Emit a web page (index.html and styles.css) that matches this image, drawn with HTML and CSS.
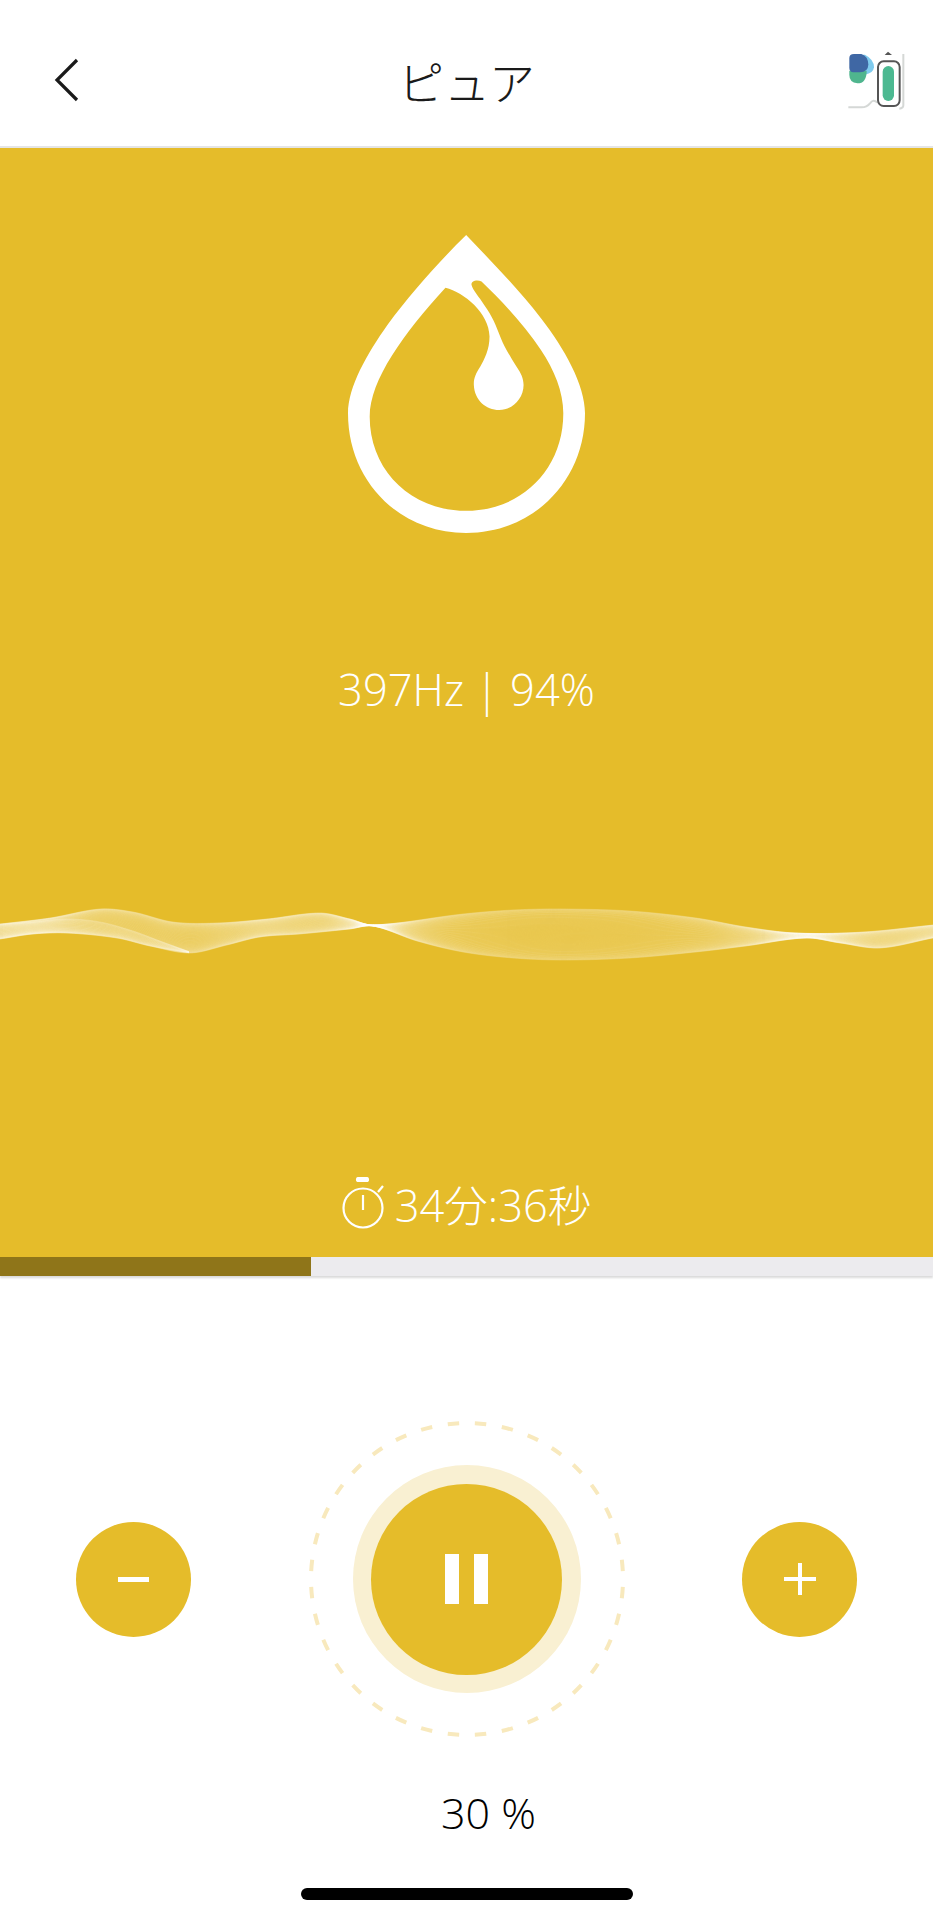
FILE: index.html
```html
<!DOCTYPE html>
<html>
<head>
  <title>ピュア</title>
  <link rel="stylesheet" href="styles.css">
</head>
<body>
  <header class="top-bar">
    <div class="back">
      <svg width="30" height="46" viewBox="0 0 30 46"><path d="M24 3 L4 23 L24 43" fill="none" stroke="#1a1a1a" stroke-width="3.2"/></svg>
    </div>
    <h1 class="title">ピュア</h1>
    <svg class="device" width="113" height="90" viewBox="0 0 339 270">
      <path d="M82 70 H240 Q250 70 250 82 V224 Q250 235 238 235 H180 Q165 210 150 222 Q140 232 125 232 H95 Q82 232 82 222 Z" fill="#fff"/>
      <path d="M85 232 H125 Q140 232 150 220 Q160 205 172 218" fill="none" stroke="#d5d8d6" stroke-width="6"/>
      <path d="M250 72 V226 Q250 235 238 236" fill="none" stroke="#d5d8d6" stroke-width="6"/>
      <path d="M110 74 H135 Q162 88 162 112 Q160 130 135 134 H110 Z" fill="#7fcbee"/>
      <path d="M88 122 H140 Q140 160 112 160 Q88 158 88 135 Z" fill="#4fb58e"/>
      <path d="M88 84 Q88 72 102 72 H124 Q144 78 145 104 Q144 126 120 127 H100 Q88 126 88 114 Z" fill="#3f67a4"/>
      <path d="M194 75 L204 65 L216 75 Z" fill="#555"/>
      <rect x="174" y="94" width="65" height="134" rx="17" fill="#fff" stroke="#555" stroke-width="6"/>
      <rect x="188" y="108" width="34" height="105" rx="17" fill="#4cb991"/>
    </svg>
  </header>

  <section class="panel">
    <svg class="drop" width="237" height="298" viewBox="82 76 710 892">
      <path d="M436 76 C512 155 590 235 660 325 C730 415 792 525 792 610 C792 810 640 968 436 968 C232 968 82 810 82 610 C82 530 140 430 200 345 C270 250 360 150 436 76 Z" fill="#fff"/>
      <path d="M374 234 C430 248 505 310 506 380 C506 420 490 450 478 470 C465 490 458 505 459 525 C461 570 495 600 535 600 C575 600 608 565 608 525 C608 505 600 490 588 472 C565 435 550 410 540 385 C525 345 515 320 490 285 C475 262 455 240 452 225 C450 212 470 208 482 215 C540 270 610 345 660 420 C700 480 727 545 727 610 C727 780 600 902 436 902 C270 902 147 780 147 620 C147 510 250 370 374 234 Z" fill="#e5bc2a"/>
    </svg>
    <p class="freq">397Hz | 94%</p>
    <svg class="wave" id="wave" width="933" height="100" viewBox="0 0 933 100"></svg>
    <div class="timer">
      <svg width="46" height="52" viewBox="0 0 46 52" fill="none" stroke="#fff" stroke-width="2.2">
        <circle cx="23" cy="31" r="19.5"/>
        <path d="M23 18 V33"/>
        <path d="M38 15 L43 9"/>
        <rect x="17" y="1" width="11" height="3" rx="1.5" fill="#fff"/>
      </svg>
      <span>34分:36秒</span>
    </div>
  </section>

  <div class="progress"><div class="progress-fill" style="width: 311px"></div></div>

  <div class="controls">
    <button class="round-btn"><span class="minus"></span></button>
    <div class="pause-wrap">
      <svg class="dash-ring" width="316" height="316" viewBox="0 0 316 316">
        <circle cx="158" cy="158" r="156" fill="none" stroke="#f8e9bd" stroke-width="4" pathLength="360" stroke-dasharray="4.2 5.8" stroke-dashoffset="-2.9"/>
      </svg>
      <div class="pause-ring">
        <button class="pause-btn"><span class="bar"></span><span class="bar"></span></button>
      </div>
    </div>
    <button class="round-btn"><span class="plus"></span></button>
  </div>

  <p class="volume">30 %</p>
  <div class="home-bar"></div>

  <script src="wave.js"></script>
</body>
</html>
```

FILE: styles.css
```css
body {
  font-family: "Open Sans", "Noto Sans CJK JP", sans-serif;
  background-color: #fff;
  width: 933px;
  height: 1920px;
  margin: 0;
  padding: 0;
  overflow: hidden;
}

.top-bar {
  display: grid;
  grid-template-columns: 113px 1fr 113px;
  align-items: center;
  height: 148px;
  padding-top: 14px;
  box-sizing: border-box;
  border-bottom: 2px solid #e5e5e5;
}

.back {
  display: flex;
  padding-left: 53px;
}

.title {
  margin: 0;
  text-align: center;
  font-family: "Noto Sans CJK JP", sans-serif;
  font-size: 46px;
  font-weight: 300;
  color: #1a1a1a;
}

.device {
  margin-top: -10px;
}

.panel {
  display: flex;
  flex-direction: column;
  align-items: center;
  height: 1109px;
  padding-top: 87px;
  box-sizing: border-box;
  background-color: #e5bc2a;
  color: #fff;
}

.freq {
  margin: 130px 0 0;
  font-size: 43.5px;
  font-weight: 300;
  line-height: 54px;
}

.wave {
  margin-top: 164px;
}

.timer {
  display: flex;
  align-items: center;
  gap: 9px;
  margin-top: 198px;
  margin-right: 2px;
  font-size: 43.5px;
  font-weight: 300;
  line-height: 54px;
}

.timer svg {
  margin-top: -6px;
}

.progress {
  height: 19px;
  background-color: #ecebee;
  box-shadow: 0 2px 2px rgba(0, 0, 0, .15);
}

.progress-fill {
  height: 100%;
  background-color: #8f7519;
}

.controls {
  display: flex;
  align-items: center;
  justify-content: space-between;
  margin-top: 145px;
  padding: 0 76px;
}

.round-btn {
  display: flex;
  align-items: center;
  justify-content: center;
  width: 115px;
  height: 115px;
  padding: 0;
  border: 0;
  border-radius: 50%;
  background-color: #e5bc2a;
}

.minus {
  width: 31px;
  height: 5px;
  background-color: #fff;
}

.plus {
  position: relative;
  width: 32px;
  height: 4px;
  background-color: #fff;
}

.plus::after {
  content: "";
  position: absolute;
  left: 14px;
  top: -14px;
  width: 4px;
  height: 32px;
  background-color: #fff;
}

.pause-wrap {
  position: relative;
  display: flex;
  align-items: center;
  justify-content: center;
  width: 316px;
  height: 316px;
}

.dash-ring {
  position: absolute;
  left: 0;
  top: 0;
}

.pause-ring {
  display: flex;
  align-items: center;
  justify-content: center;
  width: 228px;
  height: 228px;
  border-radius: 50%;
  background-color: #f9f0d2;
}

.pause-btn {
  display: flex;
  align-items: center;
  justify-content: center;
  gap: 15px;
  width: 191px;
  height: 191px;
  padding: 0;
  border: 0;
  border-radius: 50%;
  background-color: #e5bc2a;
}

.bar {
  width: 14px;
  height: 50px;
  background-color: #fff;
}

.volume {
  margin: 49px 0 0 44px;
  text-align: center;
  font-size: 43px;
  font-weight: 300;
  line-height: 54px;
  color: #000;
}

.home-bar {
  width: 332px;
  height: 12px;
  margin: 48px auto 0;
  border-radius: 6px;
  background-color: #000;
}
```

FILE: wave.js
```js
// edges of the ribbon, lines are spread between them
var upper = [[0,43],[50,37],[100,28],[133,31],[173,41],[217,42],[267,38],[320,32],[350,38],[373,44],[463,33],[513,29],[563,28],[630,30],[696,37],[746,46],[796,52],[863,51],[933,44]];
var lower = [[0,58],[33,53],[67,52],[117,57],[150,65],[190,72],[227,64],[260,56],[300,53],[350,48],[373,45],[417,60],[463,71],[513,77],[563,79],[630,77],[696,71],[746,65],[806,57],[840,62],[880,67],[933,57]];
// brighter strip on the left end
var stripTop = [[0,43],[33,41],[67,38],[100,41],[133,50],[160,60],[190,71]];
var stripBottom = [[0,58],[33,53],[67,52],[117,57],[150,65],[190,72]];

function slope(pts, i) {
  var a = pts[Math.max(i - 1, 0)];
  var b = pts[Math.min(i + 1, pts.length - 1)];
  return (b[1] - a[1]) / (b[0] - a[0]);
}

function curveAt(pts, x) {
  var i = 0;
  while (i < pts.length - 2 && x > pts[i + 1][0]) i++;
  var w = pts[i + 1][0] - pts[i][0];
  var t = (x - pts[i][0]) / w;
  var m0 = slope(pts, i) * w;
  var m1 = slope(pts, i + 1) * w;
  return (2*t*t*t - 3*t*t + 1) * pts[i][1] + (t*t*t - 2*t*t + t) * m0 +
         (-2*t*t*t + 3*t*t) * pts[i + 1][1] + (t*t*t - t*t) * m1;
}

var wave = document.getElementById('wave');

function drawRibbon(top, bottom, count, end, opacity) {
  for (var n = 0; n <= count; n++) {
    var s = n / count;
    var k = (s + (1 - Math.cos(Math.PI * s)) / 2) / 2;
    var d = '';
    for (var x = 0; x <= end; x += 3) {
      var y = curveAt(top, x) * (1 - k) + curveAt(bottom, x) * k;
      d += (x === 0 ? 'M' : 'L') + x + ' ' + y.toFixed(2);
    }
    var line = document.createElementNS('http://www.w3.org/2000/svg', 'path');
    line.setAttribute('d', d);
    line.setAttribute('fill', 'none');
    line.setAttribute('stroke', '#fff');
    line.setAttribute('stroke-width', '0.6');
    line.setAttribute('stroke-opacity', opacity);
    wave.appendChild(line);
  }
}

drawRibbon(upper, lower, 64, 936, '0.3');
drawRibbon(stripTop, stripBottom, 14, 190, '0.3');
```
